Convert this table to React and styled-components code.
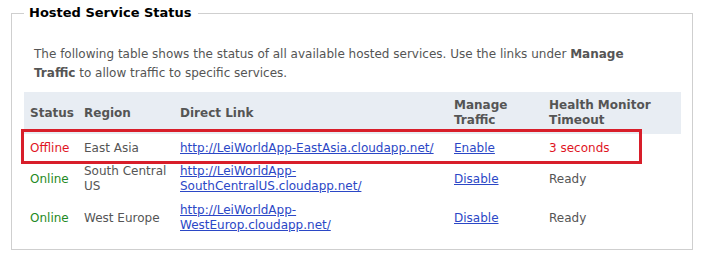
import React from 'react'
import styled, { createGlobalStyle } from 'styled-components'

const GlobalStyle = createGlobalStyle`
  html, body {
    margin: 0;
    padding: 0;
    background: #ffffff;
  }
  body {
    font-family: "DejaVu Sans", Verdana, sans-serif;
  }
`

const services = [
  {
    status: 'Offline',
    region: 'East Asia',
    link: ['http://LeiWorldApp-EastAsia.cloudapp.net/'],
    action: 'Enable',
    health: '3 seconds',
    highlight: true,
  },
  {
    status: 'Online',
    region: 'South Central US',
    link: ['http://LeiWorldApp-', 'SouthCentralUS.cloudapp.net/'],
    action: 'Disable',
    health: 'Ready',
  },
  {
    status: 'Online',
    region: 'West Europe',
    link: ['http://LeiWorldApp-', 'WestEurop.cloudapp.net/'],
    action: 'Disable',
    health: 'Ready',
  },
]

export default function App() {
  return (
    <Page>
      <GlobalStyle />
      <Box>
        <Legend>Hosted Service Status</Legend>
        <Intro>
          The following table shows the status of all available hosted services. Use the links under{' '}
          <b>Manage Traffic</b> to allow traffic to specific services.
        </Intro>
        <TableWrap>
          <Table>
            <thead>
              <tr>
                <Th $w={54}>Status</Th>
                <Th $w={96}>Region</Th>
                <Th $w={274}>Direct Link</Th>
                <Th $w={95}>Manage Traffic</Th>
                <Th>Health Monitor Timeout</Th>
              </tr>
            </thead>
            <tbody>
              {services.map((s) => (
                <tr key={s.region}>
                  <Td $tall={s.highlight}>
                    <Status $offline={s.status === 'Offline'}>{s.status}</Status>
                  </Td>
                  <Td $tall={s.highlight}>{s.region}</Td>
                  <Td $tall={s.highlight}>
                    <Link href="#">
                      {s.link.map((part, i) => (
                        <React.Fragment key={part}>
                          {i > 0 && <br />}
                          {part}
                        </React.Fragment>
                      ))}
                    </Link>
                  </Td>
                  <Td $tall={s.highlight}>
                    <Link href="#">{s.action}</Link>
                  </Td>
                  <Td $tall={s.highlight}>
                    <Health $alert={s.highlight}>{s.health}</Health>
                  </Td>
                </tr>
              ))}
            </tbody>
          </Table>
          <Highlight />
        </TableWrap>
      </Box>
    </Page>
  )
}

const Page = styled.div`
  padding: 6px 11px 12px 11px;
  width: 682px;
`

const Box = styled.fieldset`
  margin: 0;
  border: 1px solid #cfcfcf;
  padding: 10px 11px 11px 12px;
  min-width: 0;
`

const Legend = styled.legend`
  margin-left: 0;
  padding: 0 6px 0 5px;
  font-size: 13px;
  font-weight: bold;
  color: #000000;
  line-height: 14px;
`

const Intro = styled.p`
  margin: 15px 22px 9px 10px;
  font-size: 12px;
  line-height: 19px;
  color: #555555;

  b {
    font-weight: bold;
  }
`

const TableWrap = styled.div`
  position: relative;
`

const Table = styled.table`
  width: 100%;
  table-layout: fixed;
  border-collapse: collapse;
  font-size: 12px;
  line-height: 15px;
  color: #555555;
`

const Th = styled.th`
  width: ${(p) => (p.$w ? `${p.$w}px` : 'auto')};
  box-sizing: border-box;
  background: #e8edf3;
  padding: 6px 6px;
  text-align: left;
  vertical-align: middle;
  font-weight: bold;
  color: #555555;
`

const Td = styled.td`
  padding: ${(p) => (p.$tall ? '7px 6px 4px' : '4px 6px 5px')};
  vertical-align: middle;
`

const Status = styled.span`
  color: ${(p) => (p.$offline ? '#e0151f' : '#1f8a24')};
`

const Health = styled.span`
  color: ${(p) => (p.$alert ? '#e0151f' : '#555555')};
`

const Link = styled.a`
  color: #2b47c6;
  text-decoration: underline;
`

const Highlight = styled.div`
  position: absolute;
  left: -3px;
  top: 37px;
  width: 615px;
  height: 29px;
  border: 3px solid #d81e2a;
  pointer-events: none;
`
